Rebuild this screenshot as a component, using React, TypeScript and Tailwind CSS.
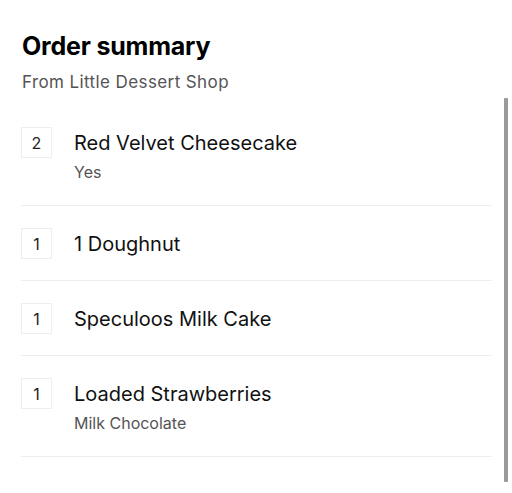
const items = [
  { qty: 2, name: 'Red Velvet Cheesecake', note: 'Yes' },
  { qty: 1, name: '1 Doughnut', note: '' },
  { qty: 1, name: 'Speculoos Milk Cake', note: '' },
  { qty: 1, name: 'Loaded Strawberries', note: 'Milk Chocolate' },
]

export default function App() {
  return (
    <div className="w-[512px] h-[493px] bg-white font-['Inter',sans-serif] text-black overflow-hidden">
      <div className="pl-[22px] pt-[30px]">
        <h1 className="text-[25px] leading-[32px] font-bold tracking-[-0.2px]">Order summary</h1>
        <p className="mt-[8px] text-[17px] leading-[24px] tracking-[0.4px] text-[#545454]">From Little Dessert Shop</p>
      </div>

      <div className="flex mt-[4px]">
        <div className="w-[471px] ml-[21px] pt-[7px]">
          {items.map((item) => (
            <div key={item.name} className="flex gap-[22px] pt-[22px] pb-[20px] border-b border-[#eeeeee]">
              <div className="w-[31px] h-[31px] shrink-0 border border-[#eeeeee] flex items-center justify-center text-[16px] text-[#222]">
                {item.qty}
              </div>
              <div className="flex flex-col">
                <span className="text-[20px] leading-[32px] text-[#111]">{item.name}</span>
                {item.note && (
                  <span className="text-[16px] leading-[26px] text-[#545454]">{item.note}</span>
                )}
              </div>
            </div>
          ))}
        </div>
        <div className="ml-[12px] w-[4px] h-[384px] bg-[#9a9a9a] rounded-[1px]" />
      </div>
    </div>
  )
}
